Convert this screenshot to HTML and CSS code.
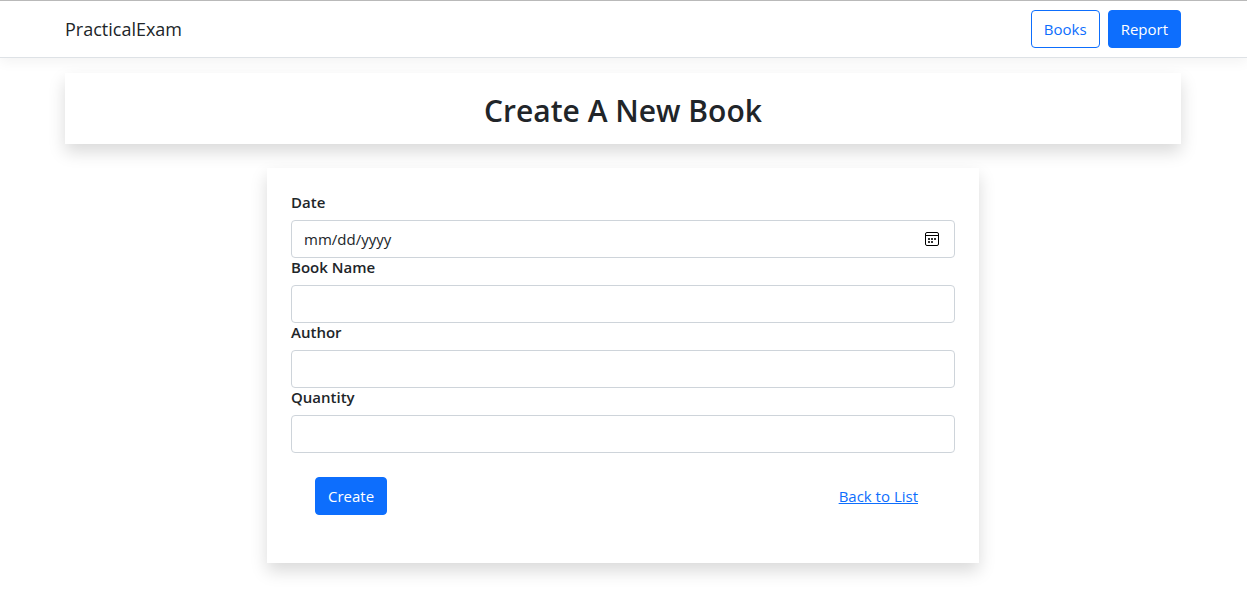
FILE: index.html
```html
<!DOCTYPE html>
<html lang="en">
<head>
<meta charset="utf-8">
<meta name="viewport" content="width=device-width, initial-scale=1">
<title>Create - PracticalExam</title>
<link rel="stylesheet" href="styles.css">
</head>
<body>
<header class="site-header">
  <nav class="container navbar">
    <a class="brand" href="#">PracticalExam</a>
    <div class="nav-actions">
      <a class="btn btn-outline" href="#">Books</a>
      <a class="btn btn-primary" href="#">Report</a>
    </div>
  </nav>
</header>
<main class="container">
  <h1 class="page-title">Create A New Book</h1>
  <form class="card">
    <div class="field">
      <label for="date">Date</label>
      <div class="date-wrap">
        <input class="control" type="date" id="date">
        <svg class="calendar" viewBox="0 0 14 14" aria-hidden="true">
          <rect x=".5" y=".5" width="13" height="13" rx="1.5" fill="none" stroke="#000"/>
          <path d="M1 3.5h12" stroke="#000"/>
          <path d="M3 6h2v2H3zM6 6h2v2H6zM9 6h2v2H9zM3 9h2v2H3zM6 9h2v2H6z" fill="#333"/>
        </svg>
      </div>
    </div>
    <div class="field">
      <label for="name">Book Name</label>
      <input class="control" type="text" id="name">
    </div>
    <div class="field">
      <label for="author">Author</label>
      <input class="control" type="text" id="author">
    </div>
    <div class="field">
      <label for="quantity">Quantity</label>
      <input class="control" type="number" id="quantity">
    </div>
    <div class="form-actions">
      <button class="btn btn-primary" type="submit">Create</button>
      <a class="btn btn-link" href="#">Back to List</a>
    </div>
  </form>
</main>
</body>
</html>
```
FILE: styles.css
```css
* {
  box-sizing: border-box;
}

body {
  margin: 0;
  background: #fff;
  color: #212529;
  font: 400 15px/24px "Segoe UI", "Open Sans", "Noto Sans", sans-serif;
}

.container {
  width: 100%;
  max-width: 1141px;
  margin: 0 auto;
  padding: 0 13px 0 12px;
}

.site-header {
  padding: 9px 0;
  border-top: 1px solid #b9b9b9;
  border-bottom: 1px solid #dee2e6;
  box-shadow: 0 4px 12px rgba(0, 0, 0, 0.05);
}

.navbar {
  display: flex;
  align-items: center;
  justify-content: space-between;
}

.brand {
  color: #212529;
  font-size: 18px;
  text-decoration: none;
}

.nav-actions {
  display: flex;
  gap: 8px;
}

.btn {
  display: inline-block;
  padding: 6px 12px;
  border: 1px solid transparent;
  border-radius: 4px;
  font: inherit;
  text-decoration: none;
  cursor: pointer;
}

.btn-primary {
  background: #0d6efd;
  border-color: #0d6efd;
  color: #fff;
}

.btn-outline {
  border-color: #0d6efd;
  color: #0d6efd;
}

.btn-link {
  color: #0d6efd;
  text-decoration: underline;
}

.page-title {
  margin: 15px 0 24px;
  padding: 18px 16px 14px;
  background: #fff;
  box-shadow: 0 8px 16px rgba(0, 0, 0, 0.15);
  font-size: 30px;
  font-weight: 600;
  line-height: 39px;
  text-align: center;
}

.card {
  max-width: 712px;
  margin: 0 auto 24px;
  padding: 25px 24px 24px;
  background: #fff;
  box-shadow: 0 8px 16px rgba(0, 0, 0, 0.15);
}

.field label {
  display: block;
  margin-bottom: 8px;
  font-weight: 600;
  line-height: 19px;
}

.control {
  display: block;
  width: 100%;
  height: 38px;
  padding: 6px 12px;
  border: 1px solid #ced4da;
  border-radius: 4px;
  background: #fff;
  color: #212529;
  font: inherit;
}

.control::-webkit-datetime-edit,
.control::-webkit-datetime-edit-fields-wrapper {
  padding: 0;
}

.control::-webkit-datetime-edit-month-field,
.control::-webkit-datetime-edit-day-field,
.control::-webkit-datetime-edit-year-field {
  padding: 0;
}

.control::-webkit-calendar-picker-indicator {
  opacity: 0;
}

.date-wrap {
  position: relative;
}

.calendar {
  position: absolute;
  top: 12px;
  right: 16px;
  width: 14px;
  height: 14px;
  pointer-events: none;
}

.form-actions {
  display: flex;
  justify-content: space-between;
  padding: 24px;
}
```
